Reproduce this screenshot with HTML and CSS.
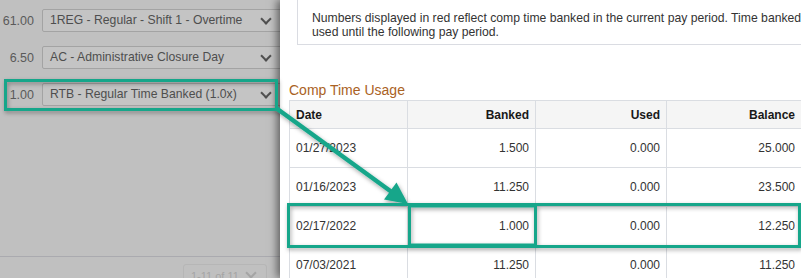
FILE: index.html
```html
<!DOCTYPE html>
<html lang="en">
<head>
    <meta charset="UTF-8">
    <title>Comp Time Usage</title>
    <link rel="stylesheet" href="styles.css">
</head>
<body>
    <div class="page">
        <div class="backdrop">
            <div class="line first">
                <span class="hours">61.00</span>
                <div class="select">1REG - Regular - Shift 1 - Overtime<span class="chev"></span></div>
            </div>
            <div class="line">
                <span class="hours">6.50</span>
                <div class="select">AC - Administrative Closure Day<span class="chev"></span></div>
            </div>
            <div class="line">
                <span class="hours">1.00</span>
                <div class="select">RTB - Regular Time Banked (1.0x)<span class="chev"></span></div>
            </div>
            <div class="pager">
                <div class="pages">1-11 of 11<span class="chev"></span></div>
            </div>
        </div>
        <div class="panel">
            <div class="note">
                <p>Numbers displayed in red reflect comp time banked in the current pay period. Time banked cannot be<br>used until the following pay period.</p>
            </div>
            <h3 class="title">Comp Time Usage</h3>
            <table class="usage">
                <tr>
                    <th class="date">Date</th>
                    <th>Banked</th>
                    <th>Used</th>
                    <th>Balance</th>
                </tr>
                <tr>
                    <td class="date">01/27/2023</td>
                    <td>1.500</td>
                    <td>0.000</td>
                    <td>25.000</td>
                </tr>
                <tr>
                    <td class="date">01/16/2023</td>
                    <td>11.250</td>
                    <td>0.000</td>
                    <td>23.500</td>
                </tr>
                <tr>
                    <td class="date">02/17/2022</td>
                    <td>1.000</td>
                    <td>0.000</td>
                    <td>12.250</td>
                </tr>
                <tr>
                    <td class="date">07/03/2021</td>
                    <td>11.250</td>
                    <td>0.000</td>
                    <td>11.250</td>
                </tr>
            </table>
        </div>
        <svg class="marks" width="801" height="278" viewBox="0 0 801 278">
            <defs>
                <filter id="shade" x="-10%" y="-30%" width="130%" height="180%">
                    <feDropShadow dx="1" dy="2" stdDeviation="2" flood-color="#000" flood-opacity="0.35"/>
                </filter>
            </defs>
            <g filter="url(#shade)" fill="none" stroke="#17a68a" stroke-width="3">
                <rect x="5.5" y="80.5" width="271" height="29"/>
                <rect x="288.5" y="204.5" width="511" height="42"/>
                <rect x="409.5" y="206" width="126" height="39"/>
                <line x1="276" y1="108" x2="391" y2="191.5" stroke-width="4.5"/>
                <polygon points="408,204 384,199.5 396.5,182.5" fill="#17a68a" stroke="none"/>
            </g>
        </svg>
    </div>
</body>
</html>
```

FILE: styles.css
```css
html, body{
    margin: 0;
    padding: 0;
}
body{
    width: 801px;
    height: 278px;
    overflow: hidden;
    background-color: white;
    font-family: "Liberation Sans", Arial, sans-serif;
}
.page{
    display: flex;
    width: 801px;
    height: 278px;
    position: relative;
    overflow: hidden;
}
.backdrop{
    width: 280px;
    flex: none;
    background-color: rgb(192,192,192);
    display: flex;
    flex-direction: column;
    padding-top: 9px;
    box-sizing: border-box;
}
.line{
    display: flex;
    align-items: center;
    height: 23px;
    margin-top: 14px;
}
.line.first{
    margin-top: 0;
}
.hours{
    width: 34px;
    text-align: right;
    font-size: 12.5px;
    color: rgb(90,90,90);
    margin-right: 8px;
}
.select{
    flex: 1;
    height: 21px;
    line-height: 21px;
    border: 1px solid rgb(163,163,163);
    border-radius: 2px;
    background-color: rgb(196,196,196);
    padding-left: 7px;
    font-size: 12.2px;
    color: rgb(78,78,78);
    position: relative;
    margin-right: -4px;
}
.chev{
    position: absolute;
    right: 13px;
    top: 5px;
    width: 6px;
    height: 6px;
    border-right: 2px solid rgb(80,80,80);
    border-bottom: 2px solid rgb(80,80,80);
    transform: rotate(45deg);
}
.pager{
    margin-top: auto;
    height: 22px;
    border-top: 1px solid rgb(170,170,175);
    padding: 7px 0 0 183px;
    box-sizing: border-box;
}
.pages{
    width: 84px;
    height: 20px;
    box-sizing: border-box;
    border: 1px solid rgb(182,182,182);
    border-radius: 3px;
    font-size: 11px;
    line-height: 12px;
    color: rgb(165,165,165);
    padding: 5px 0 0 7px;
    position: relative;
}
.pages .chev{
    top: 4px;
    right: 11px;
    border-color: rgb(165,165,165);
}
.panel{
    flex: 1;
    background-color: white;
    box-shadow: -3px 0 8px rgba(0,0,0,0.5);
    padding-left: 9px;
    position: relative;
    min-width: 0;
}
.note{
    margin-left: 8px;
    height: 45px;
    width: 640px;
    box-sizing: border-box;
    border: 1px solid rgb(218,220,226);
    border-top: 0;
    padding: 11px 0 0 14px;
}
.note p{
    margin: 0;
    font-size: 12.2px;
    line-height: 14px;
    color: rgb(51,51,51);
    white-space: nowrap;
}
.title{
    margin: 38px 0 0 0;
    height: 17px;
    font-size: 14px;
    font-weight: normal;
    color: rgb(170,98,36);
    line-height: 14px;
}
.usage{
    border-collapse: collapse;
    width: 513px;
    font-size: 12px;
    color: rgb(51,51,51);
}
.usage th, .usage td{
    border: 1px solid rgb(218,221,226);
    padding: 0 6px 0 6px;
    text-align: right;
}
.usage th{
    height: 27px;
    background-color: rgb(245,245,245);
    color: rgb(25,25,25);
}
.usage td{
    height: 38px;
}
.usage .date{
    text-align: left;
    width: 105px;
}
.usage th:nth-child(2){
    width: 115px;
}
.usage th:nth-child(3){
    width: 118px;
}
.marks{
    position: absolute;
    left: 0;
    top: 0;
    pointer-events: none;
}
```
